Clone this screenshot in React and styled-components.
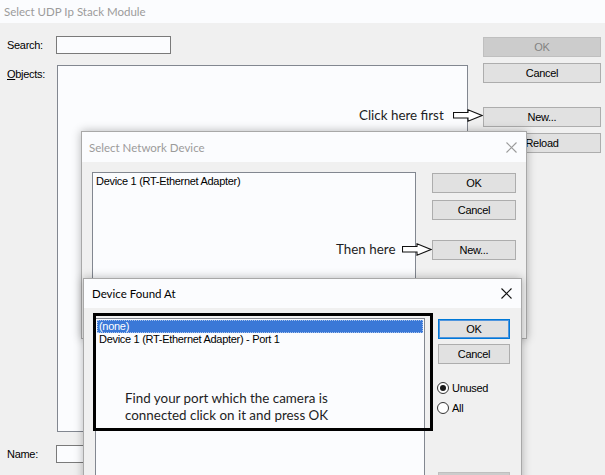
import styled, { createGlobalStyle } from "styled-components";

const GlobalStyle = createGlobalStyle`
    html, body {
        margin: 0;
        padding: 0;
        background: #f0f0f0;
        overflow: hidden;
    }
`;

const Desktop = styled.div`
    position: relative;
    width: 605px;
    height: 475px;
    overflow: hidden;
    font-family: "Liberation Sans", Arial, sans-serif;
    font-size: 11px;
    letter-spacing: -0.3px;
    color: #000;
`;

const Window = styled.div`
    position: absolute;
    left: ${(p) => p.$x}px;
    top: ${(p) => p.$y}px;
    width: ${(p) => p.$w}px;
    height: ${(p) => p.$h}px;
    box-sizing: border-box;
    display: flex;
    flex-direction: column;
    background: #f0f0f0;
    border: ${(p) => (p.$framed ? "1px solid #a8a8a8" : "none")};
    box-shadow: ${(p) => (p.$framed ? "0 0 9px rgba(0, 0, 0, 0.28)" : "none")};
`;

const TitleBar = styled.div`
    height: ${(p) => p.$h}px;
    flex-shrink: 0;
    display: flex;
    align-items: center;
    justify-content: space-between;
    padding: 0 ${(p) => p.$padRight}px 0 ${(p) => p.$padLeft}px;
    background: #fbfcfe;
    font-family: Lato, "Open Sans", sans-serif;
    font-size: 11.5px;
    letter-spacing: 0;
    color: ${(p) => (p.$active ? "#000" : "#9b9b9b")};
`;

const BaseBody = styled.div`
    display: flex;
    padding: 13px 4px 0 7px;
`;

const FormGrid = styled.div`
    display: grid;
    grid-template-columns: 49px 411px;
    grid-template-rows: 18px 367px 18px;
    row-gap: 11px;
    align-items: center;

    & > :nth-child(n + 5) {
        margin-top: 3px;
    }
`;

const Label = styled.div`
    align-self: ${(p) => (p.$top ? "start" : "center")};
    padding-top: ${(p) => (p.$top ? "3px" : "0")};
`;

const Mnemonic = styled.span`
    text-decoration: underline;
`;

const TextInput = styled.div`
    width: 115px;
    height: 18px;
    box-sizing: border-box;
    border: 1px solid #7a7a7a;
    background: #fbfcfe;
`;

const ListBox = styled.div`
    box-sizing: border-box;
    width: ${(p) => p.$w}px;
    height: ${(p) => p.$h}px;
    margin-left: ${(p) => p.$ml || 0}px;
    border: 1px solid #828790;
    background: #fbfcfe;
    padding: ${(p) => p.$pad || "1px"};
    flex-shrink: 0;
`;

const ListItem = styled.div`
    height: 13px;
    line-height: 13px;
    padding-left: 2px;
    white-space: nowrap;
    background: ${(p) => (p.$selected ? "#3a78d7" : "transparent")};
    color: ${(p) => (p.$selected ? "#fff" : "#000")};
    outline: ${(p) => (p.$selected ? "1px dotted rgba(255,255,255,0.55)" : "none")};
    outline-offset: -1px;
`;

const ButtonColumn = styled.div`
    display: flex;
    flex-direction: column;
    width: ${(p) => p.$w}px;
    margin-left: ${(p) => p.$ml}px;
    padding-top: 1px;
    flex-shrink: 0;
`;

const Button = styled.div`
    height: 20px;
    box-sizing: border-box;
    margin-top: ${(p) => p.$mt || 0}px;
    display: flex;
    align-items: center;
    justify-content: center;
    background: ${(p) => (p.$disabled ? "#cccccc" : "#e1e1e1")};
    border: 1px solid ${(p) => (p.$disabled ? "#bfbfbf" : p.$default ? "#0078d7" : "#adadad")};
    box-shadow: ${(p) => (p.$default ? "inset 0 0 0 1px #4f95de" : "none")};
    color: ${(p) => (p.$disabled ? "#838383" : "#000")};
`;

const DialogBody = styled.div`
    display: flex;
    padding: ${(p) => p.$pad};
`;

const Radio = styled.div`
    display: flex;
    align-items: center;
    gap: 3px;
    height: 13px;
    margin-top: ${(p) => p.$mt}px;
    margin-left: -1px;
`;

const RadioCircle = styled.span`
    width: 12px;
    height: 12px;
    box-sizing: border-box;
    border-radius: 50%;
    border: 1px solid #333;
    background: #fff;
    display: flex;
    align-items: center;
    justify-content: center;

    &::after {
        content: "";
        width: 6px;
        height: 6px;
        border-radius: 50%;
        background: ${(p) => (p.$checked ? "#1a1a1a" : "transparent")};
    }
`;

const Note = styled.div`
    position: absolute;
    left: ${(p) => p.$x}px;
    top: ${(p) => p.$y}px;
    display: flex;
    align-items: center;
    gap: ${(p) => p.$gap}px;
    font-family: Lato, "Open Sans", sans-serif;
    font-size: 13.4px;
    letter-spacing: 0;
    color: #1e1e24;
    white-space: nowrap;
`;

const Callout = styled.div`
    position: absolute;
    left: 93px;
    top: 313px;
    width: 340px;
    height: 118px;
    box-sizing: border-box;
    border: 3px solid #000;
    padding: 74px 0 0 29px;
    font-family: Lato, "Open Sans", sans-serif;
    font-size: 13.4px;
    letter-spacing: 0;
    line-height: 17px;
    color: #1e1e24;
`;

function CloseIcon({ active }) {
    return (
        <svg width="11" height="11" viewBox="0 0 11 11">
            <path
                d="M0.5 0.5 L10.5 10.5 M10.5 0.5 L0.5 10.5"
                stroke={active ? "#111" : "#9b9b9b"}
                strokeWidth="1.1"
                fill="none"
            />
        </svg>
    );
}

function Arrow() {
    return (
        <svg width="30" height="13" viewBox="0 0 30 13">
            <path
                d="M0.5 3.5 H15 V0.8 L29 6.5 L15 12.2 V9 H0.5 Z"
                fill="#fff"
                stroke="#111"
                strokeWidth="1.1"
                strokeLinejoin="miter"
            />
        </svg>
    );
}

function App() {
    return (
        <Desktop>
            <GlobalStyle />

            <Window $x={0} $y={0} $w={605} $h={475}>
                <TitleBar $h={23} $padLeft={4} $padRight={0}>
                    Select UDP Ip Stack Module
                </TitleBar>
                <BaseBody>
                    <FormGrid>
                        <Label>Search:</Label>
                        <TextInput />
                        <Label $top>
                            <Mnemonic>O</Mnemonic>bjects:
                        </Label>
                        <ListBox $w={411} $h={367} $ml={1} />
                        <Label>Name:</Label>
                        <TextInput />
                    </FormGrid>
                    <ButtonColumn $w={118} $ml={16}>
                        <Button $disabled>OK</Button>
                        <Button $mt={6}>Cancel</Button>
                        <Button $mt={24}>New...</Button>
                        <Button $mt={6}>Reload</Button>
                    </ButtonColumn>
                </BaseBody>
            </Window>

            <Note $x={359} $y={107} $gap={9}>
                Click here first
                <Arrow />
            </Note>

            <Window $x={81} $y={131} $w={446} $h={208} $framed>
                <TitleBar $h={30} $padLeft={7} $padRight={9}>
                    Select Network Device
                    <CloseIcon />
                </TitleBar>
                <DialogBody $pad="10px 0 0 10px">
                    <ListBox $w={324} $h={140} $pad="2px 1px">
                        <ListItem>Device 1 (RT-Ethernet Adapter)</ListItem>
                    </ListBox>
                    <ButtonColumn $w={84} $ml={16}>
                        <Button>OK</Button>
                        <Button $mt={7}>Cancel</Button>
                        <Button $mt={20}>New...</Button>
                    </ButtonColumn>
                </DialogBody>
            </Window>

            <Note $x={336} $y={241} $gap={7}>
                Then here
                <Arrow />
            </Note>

            <Window $x={83} $y={278} $w={439} $h={230} $framed>
                <TitleBar $h={29} $padLeft={8} $padRight={9} $active>
                    Device Found At
                    <CloseIcon active />
                </TitleBar>
                <DialogBody $pad="10px 0 0 11px">
                    <ListBox $w={330} $h={190}>
                        <ListItem $selected>(none)</ListItem>
                        <ListItem>Device 1 (RT-Ethernet Adapter) - Port 1</ListItem>
                    </ListBox>
                    <ButtonColumn $w={72} $ml={13}>
                        <Button $default>OK</Button>
                        <Button $mt={5}>Cancel</Button>
                        <Radio $mt={17}>
                            <RadioCircle $checked />
                            Unused
                        </Radio>
                        <Radio $mt={7}>
                            <RadioCircle />
                            All
                        </Radio>
                        <Button $mt={58} $disabled />
                    </ButtonColumn>
                </DialogBody>
            </Window>

            <Callout>
                Find your port which the camera is
                <br />
                connected click on it and press OK
            </Callout>
        </Desktop>
    );
}

export default App;
